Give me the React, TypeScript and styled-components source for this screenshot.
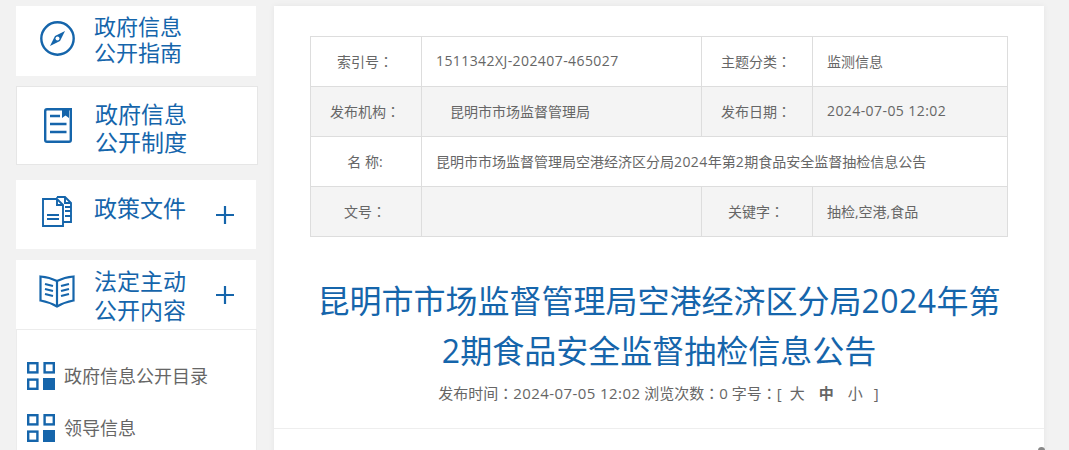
import React from 'react';
import styled, { createGlobalStyle } from 'styled-components';

const GlobalStyle = createGlobalStyle`
    html, body {
        margin: 0;
        padding: 0;
        height: 450px;
        overflow: hidden;
        background: #f2f2f2;
        font-family: "Open Sans", "Noto Sans CJK SC", sans-serif;
    }
`

const BLUE = '#1565ab'

const Page = styled.div`
    display: flex;
    align-items: flex-start;
    gap: 16px;
    height: 450px;
    overflow: hidden;
    padding: 6px 0 0 16px;
    box-sizing: border-box;
`

const Sidebar = styled.div`
    width: 242px;
    flex-shrink: 0;
    display: flex;
    flex-direction: column;
`

const Card = styled.div<{ $height: number; $mb: number; $bordered?: boolean }>`
    width: ${p => (p.$bordered ? 242 : 240)}px;
    height: ${p => p.$height}px;
    margin-bottom: ${p => p.$mb}px;
    background: #fff;
    box-sizing: border-box;
    border: ${p => (p.$bordered ? '1px solid #e6e6e6' : 'none')};
    display: grid;
    grid-template-columns: 78px 92px 1fr;
    align-items: center;
`

const IconCell = styled.div<{ $up?: number; $left?: number }>`
    display: flex;
    justify-content: center;
    padding-left: ${p => p.$left ?? 4}px;
    margin-bottom: ${p => p.$up || 0}px;
    color: ${BLUE};
`

const CardTitle = styled.div<{ $lh: number; $size?: number; $up?: number; $down?: number }>`
    font-size: ${p => p.$size || 23}px;
    line-height: ${p => p.$lh}px;
    color: ${BLUE};
    white-space: nowrap;
    margin-top: ${p => p.$down || 0}px;
    margin-bottom: ${p => p.$up || 0}px;
`

const PlusCell = styled.div`
    display: flex;
    justify-content: flex-end;
    padding-right: 22px;
`

const SubMenu = styled.div`
    width: 241px;
    height: 140px;
    background: #fff;
    box-sizing: border-box;
    border: 1px solid #ececec;
    padding: 20px 0 0 10px;
`

const SubRow = styled.div`
    display: flex;
    align-items: center;
    gap: 9px;
    height: 52px;
    font-size: 18px;
    color: #666;
`

const SubLabel = styled.span`
    margin-bottom: 2px;
`

const Main = styled.div`
    width: 770px;
    flex-shrink: 0;
    height: 600px;
    background: #fff;
    box-shadow: 0 0 6px rgba(0, 0, 0, 0.06);
    box-sizing: border-box;
    padding-top: 30px;
    position: relative;
`

const InfoTable = styled.table`
    width: 697px;
    margin-left: 36px;
    border-collapse: collapse;
    table-layout: fixed;
    font-size: 14px;
    color: #666;
`

const Row = styled.tr<{ $stripe?: boolean }>`
    height: 50px;
    background: ${p => (p.$stripe ? '#f4f4f4' : '#fff')};
`

const Label = styled.td`
    border: 1px solid #ddd;
    text-align: center;
    padding: 0 2px 2px 0;
`

const Value = styled.td<{ $indent?: number }>`
    border: 1px solid #ddd;
    padding: 0 0 2px ${p => p.$indent || 14}px;
    white-space: nowrap;
`

// the full-width colon sits centred in its box in the TC face, as in the picture
const Colon = styled.span`
    font-family: "Noto Sans CJK TC", sans-serif;
`

const Num = styled.span`
    letter-spacing: 0.42px;
`

const Title = styled.h1`
    margin: 39px 0 0;
    padding: 0 36px;
    font-size: 32px;
    line-height: 50px;
    font-weight: 400;
    text-align: center;
    color: ${BLUE};
`

const Meta = styled.div`
    margin-top: 6px;
    padding: 0 1px 24px 0;
    border-bottom: 1px solid #eee;
    text-align: center;
    font-size: 15px;
    line-height: 22px;
    color: #666;
`

const SizeOption = styled.span<{ $bold?: boolean; $first?: boolean; $last?: boolean }>`
    margin: 0 ${p => (p.$last ? 11 : 7)}px 0 ${p => (p.$first ? 8 : 7)}px;
    font-weight: ${p => (p.$bold ? 700 : 400)};
`

const ScrollDot = styled.div`
    position: absolute;
    left: 764px;
    top: 441px;
    width: 7px;
    height: 7px;
    border-radius: 50%;
    background: #888;
`

const CompassIcon = () => (
    <svg width="35" height="35" viewBox="0 0 35 35" fill="none">
        <circle cx="17.5" cy="17.5" r="16.2" stroke="currentColor" strokeWidth="2.4" />
        <path d="M25 10 L20 20 L10 25 L15 15 Z" fill="currentColor" />
        <circle cx="17.5" cy="17.5" r="2" fill="#fff" />
    </svg>
)

const DocIcon = () => (
    <svg width="28" height="35" viewBox="0 0 28 35" fill="none">
        <path d="M18 1.2 H3 Q1.2 1.2 1.2 3 V32 Q1.2 33.8 3 33.8 H25 Q26.8 33.8 26.8 32 V1.2 H25" stroke="currentColor" strokeWidth="2.4" />
        <path d="M18 0 H25 V10 L21.5 7.5 L18 10 Z" fill="currentColor" />
        <path d="M6 8 H16 M6 16 H22.5 M6 24 H22.5" stroke="currentColor" strokeWidth="2.4" />
    </svg>
)

const FilesIcon = () => (
    <svg width="30" height="31" viewBox="0 0 30 31" fill="none" stroke="currentColor" strokeWidth="1.9">
        <path d="M15 3 H1 V30 H21 V9 L15 3 V9 H21" />
        <path d="M15 1 H23 L29 7 V26 H21" />
        <path d="M23 1 V7 H29" />
        <path d="M5 19 H17 M5 23 H17 M23 11 H29 M23 15 H29 M23 20 H29" />
    </svg>
)

const BookIcon = () => (
    <svg width="36" height="33" viewBox="0 0 36 33" fill="none" stroke="currentColor" strokeWidth="2.2">
        <path d="M18 6 C13 3.5 7 2 1.5 1.5 V25.5 C7 26.5 13 28.5 18 31.5 C23 28.5 29 26.5 34.5 25.5 V1.5 C29 2 23 3.5 18 6 Z" />
        <path d="M18 6 V31.5" />
        <path d="M6 9 L14 11 M6 14 L14 16 M6 19 L14 21 M30 9 L22 11 M30 14 L22 16 M30 19 L22 21" />
    </svg>
)

const PlusIcon = () => (
    <svg width="18" height="18" viewBox="0 0 18 18">
        <path d="M0 9 H18 M9 0 V18" stroke={BLUE} strokeWidth="2.2" />
    </svg>
)

const GridIcon = () => (
    <svg width="28" height="28" viewBox="0 0 28 28" fill="none" stroke={BLUE} strokeWidth="2.4">
        <rect x="1.2" y="1.2" width="9.2" height="9.2" />
        <rect x="17.6" y="1.2" width="9.2" height="9.2" />
        <rect x="1.2" y="17.6" width="9.2" height="9.2" />
        <rect x="16" y="16" width="12" height="12" fill={BLUE} stroke="none" />
    </svg>
)

function App() {
    return (
        <>
            <GlobalStyle />
            <Page>
                <Sidebar>
                    <Card $height={70} $mb={10}>
                        <IconCell $up={6}><CompassIcon /></IconCell>
                        <CardTitle $size={22} $lh={26} $up={4}>政府信息<br />公开指南</CardTitle>
                    </Card>
                    <Card $height={79} $mb={15} $bordered>
                        <IconCell $left={3}><DocIcon /></IconCell>
                        <CardTitle $lh={28} $down={5}>政府信息<br />公开制度</CardTitle>
                    </Card>
                    <Card $height={69} $mb={11}>
                        <IconCell $up={7}><FilesIcon /></IconCell>
                        <CardTitle $lh={26} $up={14}>政策文件</CardTitle>
                        <PlusCell><PlusIcon /></PlusCell>
                    </Card>
                    <Card $height={69} $mb={0}>
                        <IconCell $up={6}><BookIcon /></IconCell>
                        <CardTitle $lh={29} $down={2}>法定主动<br />公开内容</CardTitle>
                        <PlusCell><PlusIcon /></PlusCell>
                    </Card>
                    <SubMenu>
                        <SubRow><GridIcon /><SubLabel>政府信息公开目录</SubLabel></SubRow>
                        <SubRow><GridIcon /><SubLabel>领导信息</SubLabel></SubRow>
                    </SubMenu>
                </Sidebar>
                <Main>
                    <InfoTable>
                        <colgroup>
                            <col width="111" />
                            <col width="280" />
                            <col width="111" />
                            <col width="195" />
                        </colgroup>
                        <tbody>
                            <Row>
                                <Label>索引号<Colon>：</Colon></Label>
                                <Value><Num>1511342XJ-202407-465027</Num></Value>
                                <Label>主题分类<Colon>：</Colon></Label>
                                <Value>监测信息</Value>
                            </Row>
                            <Row $stripe>
                                <Label>发布机构<Colon>：</Colon></Label>
                                <Value $indent={28}>昆明市市场监督管理局</Value>
                                <Label>发布日期<Colon>：</Colon></Label>
                                <Value><Num>2024-07-05 12:02</Num></Value>
                            </Row>
                            <Row>
                                <Label>名 称:</Label>
                                <Value colSpan={3}>昆明市市场监督管理局空港经济区分局<Num>2024</Num>年第<Num>2</Num>期食品安全监督抽检信息公告</Value>
                            </Row>
                            <Row $stripe>
                                <Label>文号<Colon>：</Colon></Label>
                                <Value></Value>
                                <Label>关键字<Colon>：</Colon></Label>
                                <Value>抽检,空港,食品</Value>
                            </Row>
                        </tbody>
                    </InfoTable>
                    <Title>昆明市市场监督管理局空港经济区分局<Num>2024</Num>年第<Num>2</Num>期食品安全监督抽检信息公告</Title>
                    <Meta>
                        发布时间<Colon>：</Colon><Num>2024-07-05 12:02</Num> 浏览次数<Colon>：</Colon>0 字号<Colon>：</Colon>[<SizeOption $first>大</SizeOption><SizeOption $bold>中</SizeOption><SizeOption $last>小</SizeOption>]
                    </Meta>
                    <ScrollDot />
                </Main>
            </Page>
        </>
    );
}

export default App;
